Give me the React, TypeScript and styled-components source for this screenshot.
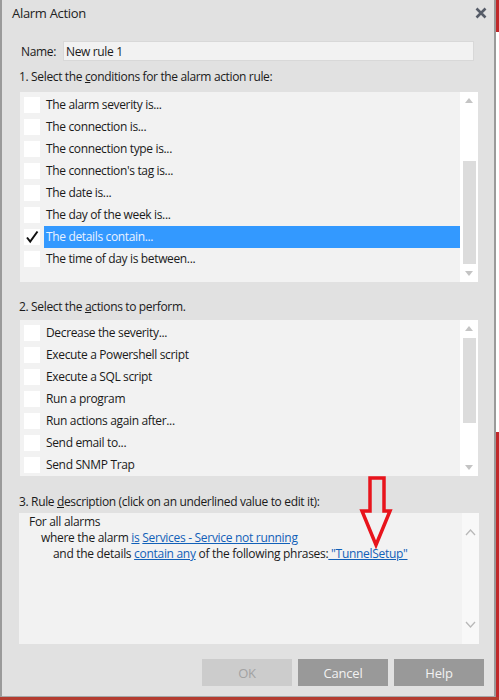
import styled, { createGlobalStyle } from "styled-components";

const GlobalStyle = createGlobalStyle`
  html, body {
    margin: 0;
    padding: 0;
    background: #ffffff;
  }
  * {
    box-sizing: border-box;
  }
`;

const conditions = [
  "The alarm severity is...",
  "The connection is...",
  "The connection type is...",
  "The connection's tag is...",
  "The date is...",
  "The day of the week is...",
  "The details contain...",
  "The time of day is between...",
];

const actions = [
  "Decrease the severity...",
  "Execute a Powershell script",
  "Execute a SQL script",
  "Run a program",
  "Run actions again after...",
  "Send email to...",
  "Send SNMP Trap",
];

const Desktop = styled.div`
  width: 499px;
  height: 700px;
  display: flex;
  flex-direction: column;
  background: linear-gradient(
    to bottom,
    #c0282a 0,
    #c0282a 32px,
    #ffffff 32px,
    #ffffff 432px,
    #c0282a 432px
  );
  font-family: "Open Sans", "Noto Sans", sans-serif;
  font-size: 12px;
  letter-spacing: -0.35px;
  color: #1a1a1a;
`;

const Dialog = styled.div`
  position: relative;
  width: 496px;
  height: 697px;
  background: #e1e1e1;
  border-left: 2px solid #9a9a9a;
  border-right: 2px solid #9a9a9a;
  border-bottom: 1px solid #a8a8a8;
  display: flex;
  flex-direction: column;
`;

const BottomEdge = styled.div`
  width: 499px;
  height: 3px;
  background: #b43c30;
`;

const TitleBar = styled.div`
  height: 26px;
  display: flex;
  align-items: center;
  justify-content: space-between;
  padding: 0 6px 0 10px;
`;

const Title = styled.span`
  font-size: 13px;
  letter-spacing: -0.3px;
  color: #222;
`;

const CloseButton = styled.div`
  width: 14px;
  height: 14px;
  display: flex;
  align-items: center;
  justify-content: center;
`;

const Body = styled.div`
  flex: 1;
  display: flex;
  flex-direction: column;
  padding: 0 16px 0 17px;
`;

const NameRow = styled.div`
  margin-top: 15px;
  display: flex;
  align-items: center;
  padding-left: 2px;
`;

const NameLabel = styled.span`
  width: 42px;
`;

const NameInput = styled.div`
  width: 411px;
  height: 20px;
  background: #f2f2f2;
  border: 1px solid #d8d8d8;
  padding: 0 2px;
  display: flex;
  align-items: center;
`;

const SectionLabel = styled.div<{ $top: number }>`
  margin-top: ${(p) => p.$top}px;
  line-height: 16px;
  height: 16px;
`;

const Mnemonic = styled.span`
  text-decoration: underline;
`;

const ListBox = styled.div<{ $height: number; $top: number }>`
  margin-top: ${(p) => p.$top}px;
  margin-left: 1px;
  width: 458px;
  height: ${(p) => p.$height}px;
  background: #f2f2f2;
  display: flex;
`;

const Rows = styled.div`
  flex: 1;
  padding-top: 2px;
  display: flex;
  flex-direction: column;
`;

const Row = styled.div`
  height: 22px;
  display: flex;
  align-items: center;
`;

const CheckCell = styled.div`
  width: 24px;
  height: 22px;
  display: flex;
  align-items: center;
  justify-content: center;
`;

const CheckBox = styled.div`
  width: 16px;
  height: 16px;
  background: #ffffff;
  display: flex;
  align-items: center;
  justify-content: center;
`;

const RowText = styled.div<{ $selected?: boolean }>`
  flex: 1;
  height: 22px;
  line-height: 22px;
  padding-left: 2px;
  background: ${(p) => (p.$selected ? "#3399ff" : "transparent")};
  color: ${(p) => (p.$selected ? "#eaf2ff" : "#1a1a1a")};
`;

const ScrollBar = styled.div`
  width: 18px;
  background: #ffffff;
  display: flex;
  flex-direction: column;
  align-items: center;
`;

const ScrollArrow = styled.div`
  height: 17px;
  width: 100%;
  display: flex;
  align-items: center;
  justify-content: center;
`;

const Track = styled.div`
  flex: 1;
  width: 100%;
  display: flex;
  flex-direction: column;
  align-items: center;
`;

const Thumb = styled.div<{ $offset: number; $size: number }>`
  margin-top: ${(p) => p.$offset}px;
  width: 13px;
  height: ${(p) => p.$size}px;
  background: #dcdcdc;
`;

const DescBox = styled.div`
  margin-top: 3px;
  width: 460px;
  height: 131px;
  background: #f2f2f2;
  display: flex;
  letter-spacing: -0.3px;
`;

const DescText = styled.div`
  flex: 1;
  padding: 1px 0 0 10px;
  display: flex;
  flex-direction: column;
`;

const DescLine = styled.div<{ $indent: number }>`
  height: 16px;
  line-height: 16px;
  padding-left: ${(p) => p.$indent}px;
  white-space: pre;
`;

const Link = styled.span`
  color: #1160b8;
  text-decoration: underline;
`;

const DescScroll = styled.div`
  width: 17px;
  background: #f8f8f8;
  display: flex;
  flex-direction: column;
  justify-content: space-between;
  align-items: center;
  padding: 16px 0 16px;
`;

const ButtonBar = styled.div`
  margin: 15px -6px 0 0;
  display: flex;
  justify-content: flex-end;
  gap: 6px;
`;

const Button = styled.div<{ $disabled?: boolean }>`
  width: 90px;
  height: 27px;
  display: flex;
  align-items: center;
  justify-content: center;
  font-size: 13px;
  letter-spacing: -0.2px;
  background: ${(p) => (p.$disabled ? "#cccccc" : "#999999")};
  color: ${(p) => (p.$disabled ? "#a2a2a2" : "#f2f2f2")};
`;

const Arrow = styled.svg`
  position: absolute;
  left: 356px;
  top: 474px;
`;

function UpTriangle() {
  return (
    <svg width="8" height="5" viewBox="0 0 8 5">
      <path d="M0 5 L4 0 L8 5 Z" fill="#c4c4c4" />
    </svg>
  );
}

function DownTriangle() {
  return (
    <svg width="8" height="5" viewBox="0 0 8 5">
      <path d="M0 0 L4 5 L8 0 Z" fill="#c4c4c4" />
    </svg>
  );
}

function Chevron({ down }: { down?: boolean }) {
  return (
    <svg width="11" height="7" viewBox="0 0 11 7">
      <path
        d={down ? "M1 1 L5.5 6 L10 1" : "M1 6 L5.5 1 L10 6"}
        fill="none"
        stroke="#b8b8b8"
        strokeWidth="1.3"
      />
    </svg>
  );
}

function CheckMark() {
  return (
    <svg width="14" height="14" viewBox="0 0 14 14">
      <path
        d="M2 7.5 L5.2 11.5 L12.5 1.5"
        fill="none"
        stroke="#111"
        strokeWidth="2"
        strokeLinejoin="miter"
      />
    </svg>
  );
}

interface ListProps {
  items: string[];
  height: number;
  top: number;
  selected?: number;
  thumbOffset: number;
  thumbSize: number;
}

function CheckList(props: ListProps) {
  return (
    <ListBox $height={props.height} $top={props.top}>
      <Rows>
        {props.items.map((item, i) => (
          <Row key={item}>
            <CheckCell>
              <CheckBox>{i === props.selected && <CheckMark />}</CheckBox>
            </CheckCell>
            <RowText $selected={i === props.selected}>{item}</RowText>
          </Row>
        ))}
      </Rows>
      <ScrollBar>
        <ScrollArrow>
          <UpTriangle />
        </ScrollArrow>
        <Track>
          <Thumb $offset={props.thumbOffset} $size={props.thumbSize} />
        </Track>
        <ScrollArrow>
          <DownTriangle />
        </ScrollArrow>
      </ScrollBar>
    </ListBox>
  );
}

export default function App() {
  return (
    <Desktop>
      <GlobalStyle />
      <Dialog>
        <TitleBar>
          <Title>Alarm Action</Title>
          <CloseButton>
            <svg width="12" height="12" viewBox="0 0 12 12">
              <path
                d="M1.5 1.5 L10.5 10.5 M10.5 1.5 L1.5 10.5"
                stroke="#565c68"
                strokeWidth="2.6"
              />
            </svg>
          </CloseButton>
        </TitleBar>
        <Body>
          <NameRow>
            <NameLabel>Name:</NameLabel>
            <NameInput>New rule 1</NameInput>
          </NameRow>
          <SectionLabel $top={8}>
            1. Select the <Mnemonic>c</Mnemonic>onditions for the alarm action
            rule:
          </SectionLabel>
          <CheckList
            items={conditions}
            height={190}
            top={7}
            selected={6}
            thumbOffset={52}
            thumbSize={103}
          />
          <SectionLabel $top={17}>
            2. Select the <Mnemonic>a</Mnemonic>ctions to perform.
          </SectionLabel>
          <CheckList
            items={actions}
            height={156}
            top={5}
            thumbOffset={1}
            thumbSize={85}
          />
          <SectionLabel $top={18}>
            3. Rule <Mnemonic>d</Mnemonic>escription (click on an underlined
            value to edit it):
          </SectionLabel>
          <DescBox>
            <DescText>
              <DescLine $indent={0}>For all alarms</DescLine>
              <DescLine $indent={12}>
                where the alarm <Link>is</Link>{" "}
                <Link>Services - Service not running</Link>
              </DescLine>
              <DescLine $indent={24}>
                and the details <Link>contain any</Link> of the following
                phrases:<Link> "TunnelSetup"</Link>
              </DescLine>
            </DescText>
            <DescScroll>
              <Chevron />
              <Chevron down />
            </DescScroll>
          </DescBox>
          <ButtonBar>
            <Button $disabled>OK</Button>
            <Button>Cancel</Button>
            <Button>Help</Button>
          </ButtonBar>
        </Body>
        <Arrow width="36" height="76" viewBox="0 0 36 76">
          <path
            d="M12 4 L26 4 L26 37 L32 37 L18 71 L4 37 L12 37 Z"
            fill="none"
            stroke="#e8141c"
            strokeWidth="3.5"
            strokeLinejoin="miter"
          />
        </Arrow>
      </Dialog>
      <BottomEdge />
    </Desktop>
  );
}
